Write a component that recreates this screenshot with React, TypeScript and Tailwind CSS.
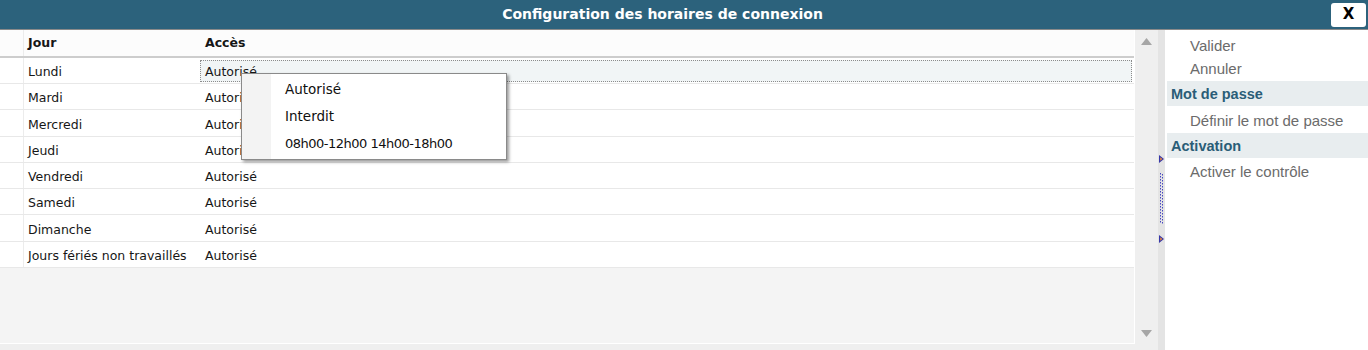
const jours = [
  "Lundi",
  "Mardi",
  "Mercredi",
  "Jeudi",
  "Vendredi",
  "Samedi",
  "Dimanche",
  "Jours fériés non travaillés",
];

// hauteurs de ligne (le tableau d'origine a des lignes de ~26.25px)
const hauteurs = ["h-[26px]", "h-[26px]", "h-[27px]", "h-[26px]", "h-[26px]", "h-[26px]", "h-[27px]", "h-[26px]"];

const dejavu = "font-['DejaVu_Sans',sans-serif]";
const arial = "font-['Liberation_Sans',Arial,sans-serif]";

function Triangle({ up }: { up?: boolean }) {
  return (
    <svg width="11" height="7" viewBox="0 0 11 7">
      <polygon points={up ? "5.5,0 11,7 0,7" : "0,0 11,0 5.5,7"} fill="#a6a6a6" />
    </svg>
  );
}

function Fleche({ y }: { y: number }) {
  return (
    <g>
      <polygon points={`1,${y} 6,${y + 4} 1,${y + 8}`} fill="#3636a8" />
      <polygon points={`2.2,${y + 2.2} 4.4,${y + 4} 2.2,${y + 5.8}`} fill="#f08a3c" />
    </g>
  );
}

function Splitter() {
  const dots = [];
  for (let y = 143; y < 194; y += 3) {
    dots.push(<rect key={"a" + y} x="2" y={y} width="1" height="1.5" fill="#4646c0" />);
    dots.push(<rect key={"b" + y} x="4" y={y + 1} width="1" height="1.5" fill="#4646c0" />);
  }
  return (
    <div className="w-[7px] bg-[#e4e4e4] shrink-0">
      <svg width="7" height="320" viewBox="0 0 7 320">
        <Fleche y={125} />
        {dots}
        <Fleche y={205} />
      </svg>
    </div>
  );
}

export default function App() {
  return (
    <div className="w-[1368px] h-[350px] flex flex-col bg-[#efefef] overflow-hidden">
      {/* barre de titre */}
      <div className="h-[30px] shrink-0 flex items-center bg-[#2c627c] border-b border-[#8a8a8a]">
        <div className={`flex-1 text-center text-white font-bold text-[14px] ${dejavu}`}>
          Configuration des horaires de connexion
        </div>
        <div className="w-[43px] flex justify-end pr-[2px]">
          <div className={`w-[35px] h-[24px] bg-white rounded-[3px] flex items-center justify-center font-bold text-[15px] text-black ${dejavu}`}>
            X
          </div>
        </div>
      </div>

      <div className="flex-1 flex min-h-0">
        {/* tableau */}
        <div className="w-[1135px] shrink-0 flex flex-col">
          <div className={`relative h-[314px] bg-[#f4f4f4] border-r border-b border-white text-[12.5px] text-[#161616] ${dejavu}`}>
            <div className="flex h-[28px] bg-[#fcfcfc] border-b-2 border-[#cdcdcd] font-bold">
              <div className="w-[24px] border-r border-[#ececec]" />
              <div className="w-[176px] pl-[4px] flex items-center">Jour</div>
              <div className="flex-1 pl-[5px] flex items-center">Accès</div>
            </div>
            {jours.map((j, i) => (
              <div key={j} className={`flex ${hauteurs[i]} bg-white border-b border-[#e8e8e8]`}>
                <div className="w-[24px] border-r border-[#ececec]" />
                <div className="w-[176px] pl-[4px] pt-[4px] flex items-center whitespace-nowrap">{j}</div>
                {i === 0 ? (
                  <div className="flex-1 flex items-center pt-[2px] pb-[1px] pr-[2px]">
                    <div className="h-full flex-1 flex items-center pl-[4px] pt-[2px] bg-[#f1f5f6] border border-dotted border-[#8c8c8c]">
                      Autorisé
                    </div>
                  </div>
                ) : (
                  <div className="flex-1 pl-[5px] pt-[4px] flex items-center">Autorisé</div>
                )}
              </div>
            ))}

            {/* menu contextuel */}
            <div className="absolute left-[241px] top-[43px] w-[266px] h-[87px] bg-white border border-[#8a8a8a] shadow-[2px_2px_3px_rgba(0,0,0,0.4)] flex text-[13.5px] text-[#101010]">
              <div className="w-[29px] bg-[#f3f3f3]" />
              <div className="flex-1 flex flex-col pt-[1px]">
                <div className="h-[27.5px] pl-[14px] flex items-center">Autorisé</div>
                <div className="h-[27.5px] pl-[14px] flex items-center">Interdit</div>
                <div className="h-[27.5px] pl-[14px] flex items-center text-[13px] tracking-[-0.5px]">
                  08h00-12h00 14h00-18h00
                </div>
              </div>
            </div>
          </div>
        </div>

        {/* barre de défilement */}
        <div className="w-[23px] shrink-0 flex flex-col items-center justify-between pt-[8px] pb-[13px]">
          <Triangle up />
          <Triangle />
        </div>

        <Splitter />

        {/* actions */}
        <div className={`flex-1 bg-white flex flex-col pt-[5px] text-[15px] ${arial}`}>
          <div className="h-[23px] pl-[25px] flex items-center text-[#6b6b6b]">Valider</div>
          <div className="h-[23px] pl-[25px] flex items-center text-[#6b6b6b]">Annuler</div>
          <div className="h-[25px] ml-[2px] pl-[4px] pt-[2px] flex items-center bg-[#e8edef] font-bold text-[14.5px] text-[#2a5d77]">
            Mot de passe
          </div>
          <div className="h-[27px] pl-[25px] pt-[3px] flex items-center text-[#6b6b6b]">Définir le mot de passe</div>
          <div className="h-[25px] ml-[2px] pl-[4px] pt-[2px] flex items-center bg-[#e8edef] font-bold text-[14.5px] text-[#2a5d77]">
            Activation
          </div>
          <div className="h-[26px] pl-[25px] pt-[2px] flex items-center text-[#6b6b6b]">Activer le contrôle</div>
        </div>
      </div>
    </div>
  );
}
